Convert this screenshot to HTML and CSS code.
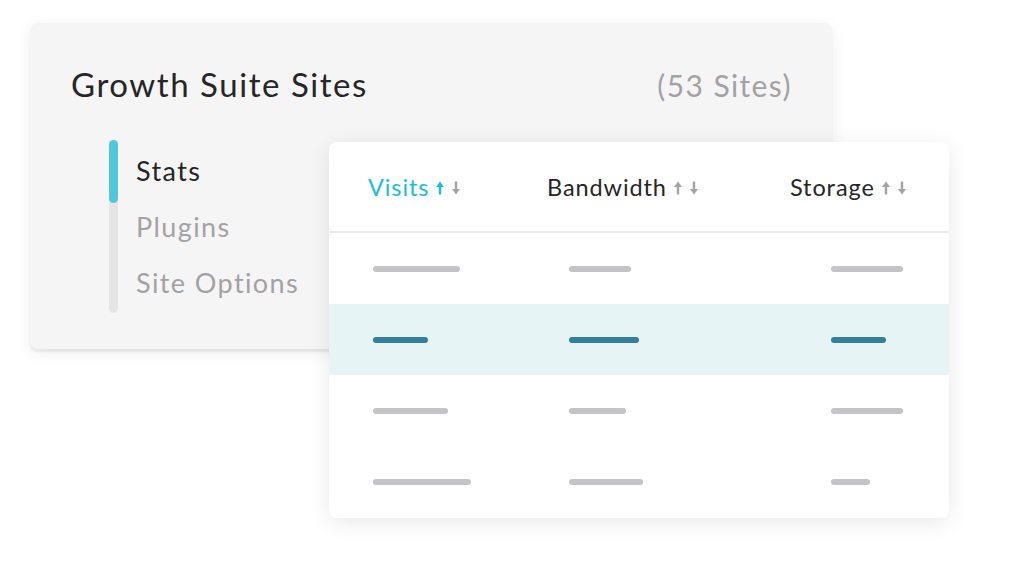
FILE: index.html
```html
<!DOCTYPE html>
<html lang="en">
<head>
  <meta charset="UTF-8">
  <title>Growth Suite Sites</title>
  <link rel="stylesheet" href="styles.css">
</head>
<body>
  <div class="stage">

    <!-- back card: site list -->
    <div class="sites_card">
      <div class="sites_head">
        <h1>Growth Suite Sites</h1>
        <span class="count">(53 Sites)</span>
      </div>
      <div class="nav">
        <div class="track"><div class="thumb"></div></div>
        <ul>
          <li class="active">Stats</li>
          <li>Plugins</li>
          <li>Site Options</li>
        </ul>
      </div>
    </div>

    <!-- front card: table -->
    <div class="table_card">
      <div class="table_head">
        <div class="th sorted">Visits
          <svg class="arrows" width="24" height="14" viewBox="0 0 24 14"><path class="up" d="M4 13.5V4"/><path class="up head" d="M0 6L4 0.5 8 6z"/><path class="down" d="M20 0.5V10"/><path class="down head" d="M16 8l4 5.5 4-5.5z"/></svg>
        </div>
        <div class="th">Bandwidth
          <svg class="arrows" width="24" height="14" viewBox="0 0 24 14"><path class="up" d="M4 13.5V4"/><path class="up head" d="M0 6L4 0.5 8 6z"/><path class="down" d="M20 0.5V10"/><path class="down head" d="M16 8l4 5.5 4-5.5z"/></svg>
        </div>
        <div class="th">Storage
          <svg class="arrows" width="24" height="14" viewBox="0 0 24 14"><path class="up" d="M4 13.5V4"/><path class="up head" d="M0 6L4 0.5 8 6z"/><path class="down" d="M20 0.5V10"/><path class="down head" d="M16 8l4 5.5 4-5.5z"/></svg>
        </div>
      </div>
      <div class="row">
        <div><span class="bar" style="width: 87px"></span></div>
        <div><span class="bar" style="width: 62px"></span></div>
        <div><span class="bar" style="width: 72px"></span></div>
      </div>
      <div class="row selected">
        <div><span class="bar" style="width: 55px"></span></div>
        <div><span class="bar" style="width: 70px"></span></div>
        <div><span class="bar" style="width: 55px"></span></div>
      </div>
      <div class="row">
        <div><span class="bar" style="width: 75px"></span></div>
        <div><span class="bar" style="width: 57px"></span></div>
        <div><span class="bar" style="width: 72px"></span></div>
      </div>
      <div class="row">
        <div><span class="bar" style="width: 98px"></span></div>
        <div><span class="bar" style="width: 74px"></span></div>
        <div><span class="bar" style="width: 39px"></span></div>
      </div>
    </div>

  </div>
</body>
</html>
```

FILE: styles.css
```css
html {
  box-sizing: border-box;
}
*, *:before, *:after {
  box-sizing: inherit;
}
body {
  margin: 0;
  background: #ffffff;
  font-family: Lato, "Open Sans", sans-serif;
  color: #2a2a2a;
}
.stage {
  position: relative;
  width: 1010px;
  height: 585px;
  padding: 23px 0 0 30px;
}

/* back card */
.sites_card {
  width: 802px;
  height: 326px;
  background: #f6f5f6;
  border-radius: 8px;
  box-shadow: 0 3px 2px rgba(0, 0, 0, 0.06), 0 4px 16px rgba(0, 0, 0, 0.07);
  padding: 41px 40px 0 41px;
}
.sites_head {
  display: flex;
  justify-content: space-between;
  align-items: baseline;
}
h1 {
  margin: 0;
  font-size: 33px;
  font-weight: 400;
  line-height: 40px;
  letter-spacing: 1.55px;
  color: #262626;
}
.count {
  font-size: 30px;
  letter-spacing: 1.4px;
  color: #a3a2a3;
}
.nav {
  display: flex;
  gap: 18px;
  margin: 36px 0 0 38px;
}
.track {
  width: 9px;
  height: 173px;
  border-radius: 5px;
  background: #e6e5e6;
}
.thumb {
  height: 63px;
  border-radius: 5px;
  background: #4fc8dc;
}
ul {
  list-style: none;
  margin: 0;
  padding: 3px 0 0;
}
li {
  height: 56px;
  line-height: 56px;
  font-size: 27px;
  letter-spacing: 1.4px;
  color: #a3a2a3;
}
li.active {
  color: #262626;
}

/* front card, lies over the back card */
.table_card {
  position: absolute;
  left: 329px;
  top: 142px;
  width: 620px;
  height: 376px;
  background: #ffffff;
  border-radius: 8px;
  box-shadow: 0 4px 22px rgba(0, 0, 0, 0.09);
  overflow: hidden;
}
.table_head {
  display: grid;
  grid-template-columns: 179px 243px auto;
  align-items: center;
  height: 91px;
  padding-left: 39px;
  border-bottom: 2px solid #ebebeb;
}
.th {
  display: flex;
  align-items: center;
  gap: 7px;
  font-size: 23.5px;
  letter-spacing: 0.9px;
  color: #262626;
}
.th.sorted {
  color: #1dbcd8;
}
.arrows {
  flex: none;
  fill: none;
  stroke: #a5a4a5;
  stroke-width: 2.4;
  margin-top: 2px;
}
.arrows .head {
  fill: #a5a4a5;
  stroke: none;
}
.th.sorted .up {
  stroke: #1dbcd8;
}
.th.sorted .up.head {
  fill: #1dbcd8;
  stroke: none;
}
.row {
  display: grid;
  grid-template-columns: 196px 262px auto;
  align-items: center;
  height: 71px;
  padding-left: 44px;
}
.row > div {
  display: flex;
}
.row.selected {
  background: #e6f4f6;
}
.bar {
  display: block;
  height: 6px;
  border-radius: 3px;
  background: #c4c4c6;
}
.selected .bar {
  background: #33809a;
}
```
